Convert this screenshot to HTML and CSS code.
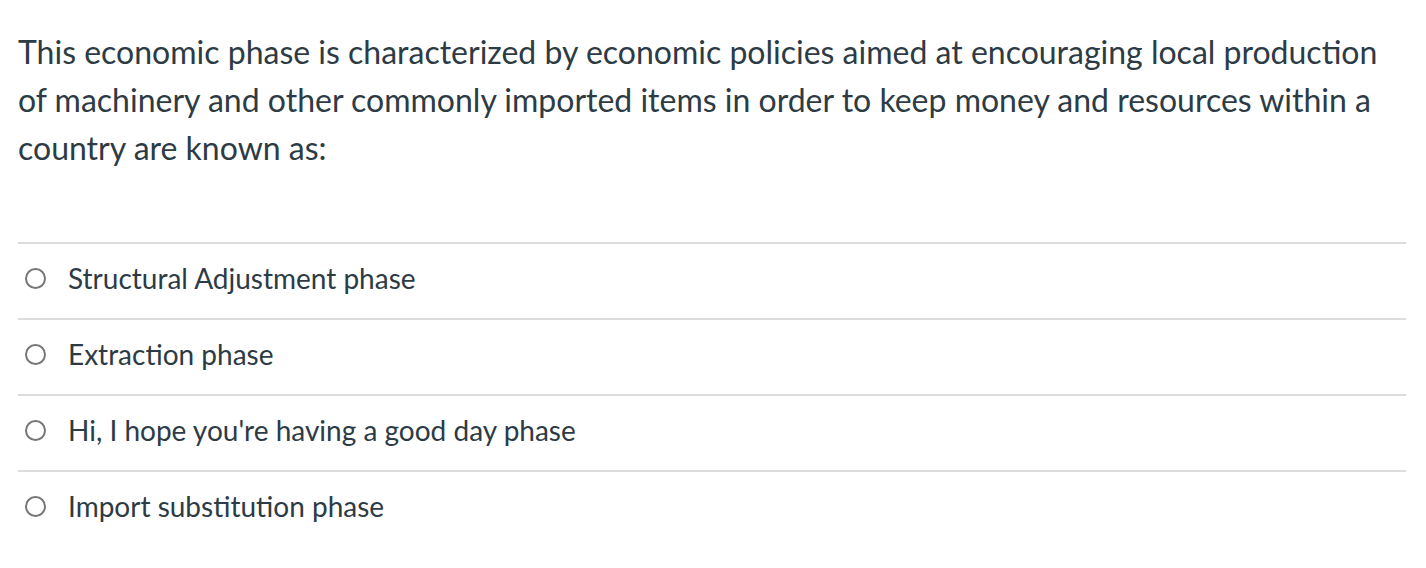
FILE: index.html
```html
<!DOCTYPE html>
<html>
<head>
<meta charset="utf-8">
<link rel="stylesheet" href="styles.css">
</head>
<body>
<div class="quiz">
  <div class="question">This economic phase is characterized by economic policies aimed at encouraging local production of machinery and other commonly imported items in order to keep money and resources within a country are known as:</div>
  <div class="answers">
    <label class="answer"><span class="radio"></span><span class="label">Structural Adjustment phase</span></label>
    <label class="answer"><span class="radio"></span><span class="label">Extraction phase</span></label>
    <label class="answer"><span class="radio"></span><span class="label">Hi, I hope you're having a good day phase</span></label>
    <label class="answer"><span class="radio"></span><span class="label">Import substitution phase</span></label>
  </div>
</div>
</body>
</html>
```

FILE: styles.css
```css
html, body {
  margin: 0;
  padding: 0;
  background: #ffffff;
}
body {
  font-family: Lato, "Liberation Sans", sans-serif;
  color: #2d3b45;
}
.quiz {
  padding: 28px 20px 0 18px;
}
.question {
  font-size: 32px;
  line-height: 48px;
}
.answers {
  margin-top: 70px;
}
.answer {
  display: flex;
  align-items: center;
  box-sizing: border-box;
  height: 76px;
  padding-bottom: 6px;
  border-top: 2px solid #dcdcdc;
  padding-left: 7px;
}
.radio {
  display: block;
  width: 21px;
  height: 21px;
  border: 2px solid #777777;
  border-radius: 50%;
  box-sizing: border-box;
  flex: 0 0 21px;
  margin-right: 22px;
}
.label {
  font-size: 28px;
  line-height: 36px;
}
```
